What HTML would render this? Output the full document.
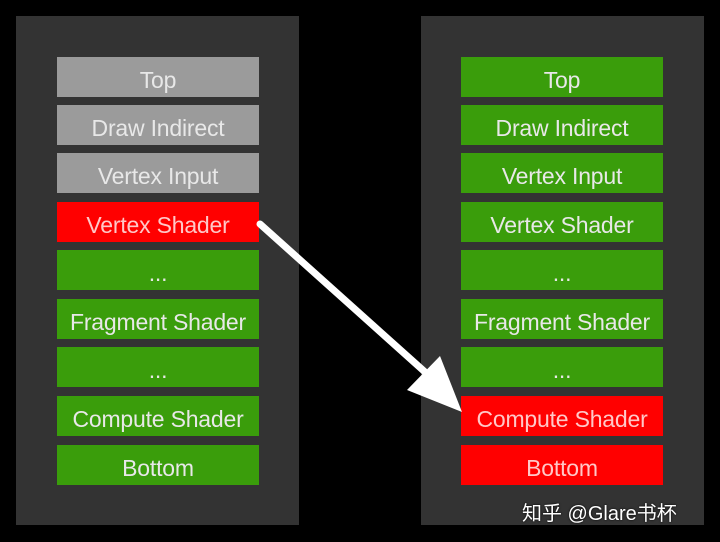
<!DOCTYPE html>
<html><head><style>
body{margin:0;width:720px;height:542px;background:#000;position:relative;overflow:hidden;font-family:"Liberation Sans","Noto Sans CJK SC",sans-serif}
.p{position:absolute;top:16px;width:283px;height:509px;background:#333}
.b{position:absolute;width:202px;height:40px;line-height:46px;text-align:center;color:#e8e8e8;font-size:23px;letter-spacing:-0.2px;overflow:hidden}
.g{background:#9b9b9b}.gr{background:#3a9d0b}.r{background:#ff0000;color:#ffc8c8}
</style></head><body>
<div class="p" style="left:16px"></div>
<div class="p" style="left:421px"></div>
<div class="b g" style="left:57px;top:57px">Top</div>
<div class="b g" style="left:57px;top:105px">Draw Indirect</div>
<div class="b g" style="left:57px;top:153px">Vertex Input</div>
<div class="b r" style="left:57px;top:202px">Vertex Shader</div>
<div class="b gr" style="left:57px;top:250px">...</div>
<div class="b gr" style="left:57px;top:299px">Fragment Shader</div>
<div class="b gr" style="left:57px;top:347px">...</div>
<div class="b gr" style="left:57px;top:396px">Compute Shader</div>
<div class="b gr" style="left:57px;top:445px">Bottom</div>
<div class="b gr" style="left:461px;top:57px">Top</div>
<div class="b gr" style="left:461px;top:105px">Draw Indirect</div>
<div class="b gr" style="left:461px;top:153px">Vertex Input</div>
<div class="b gr" style="left:461px;top:202px">Vertex Shader</div>
<div class="b gr" style="left:461px;top:250px">...</div>
<div class="b gr" style="left:461px;top:299px">Fragment Shader</div>
<div class="b gr" style="left:461px;top:347px">...</div>
<div class="b r" style="left:461px;top:396px">Compute Shader</div>
<div class="b r" style="left:461px;top:445px">Bottom</div>
<svg style="position:absolute;left:0;top:0" width="720" height="542">
<line x1="260" y1="224" x2="425" y2="372" stroke="#fff" stroke-width="7" stroke-linecap="round"/>
<polygon points="462,412 407,390 440,356" fill="#fff"/>
</svg>
<div style="position:absolute;left:522px;top:497px;color:#fff;font-size:20px;text-shadow:0 0 2px #000">知乎 @Glare书杯</div>
</body></html>
